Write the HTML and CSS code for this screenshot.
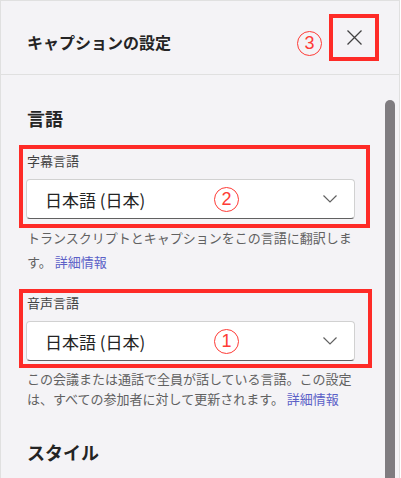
FILE: index.html
```html
<!DOCTYPE html>
<html lang="ja">
<head>
  <meta charset="UTF-8">
  <title>キャプションの設定</title>
  <link rel="stylesheet" href="styles.css">
</head>
<body>

  <div class="panel">
    <div class="header">
      <h1 class="title">キャプションの設定</h1>
      <span class="badge badge-head">3</span>
      <div class="close-mark">
        <svg width="15" height="15" viewBox="0 0 15 15">
          <path d="M0.5 0.5 L14.5 14.5 M14.5 0.5 L0.5 14.5" stroke="#424242" stroke-width="1.3" fill="none"/>
        </svg>
      </div>
    </div>

    <div class="content">
      <div class="main">
        <h2 class="section-title first">言語</h2>

        <div class="field field-caption">
          <div class="field-label">字幕言語</div>
          <div class="select">
            <span class="select-text">日本語 (日本)</span>
            <span class="badge badge-select">2</span>
            <svg class="chevron" width="14" height="8" viewBox="0 0 14 8">
              <path d="M0.5 0.5 L7 7 L13.5 0.5" stroke="#616161" stroke-width="1.2" fill="none"/>
            </svg>
          </div>
        </div>
        <p class="desc desc-caption">トランスクリプトとキャプションをこの言語に翻訳します。&nbsp;<a href="#" class="more">詳細情報</a></p>

        <div class="field field-spoken">
          <div class="field-label">音声言語</div>
          <div class="select">
            <span class="select-text">日本語 (日本)</span>
            <span class="badge badge-select">1</span>
            <svg class="chevron" width="14" height="8" viewBox="0 0 14 8">
              <path d="M0.5 0.5 L7 7 L13.5 0.5" stroke="#616161" stroke-width="1.2" fill="none"/>
            </svg>
          </div>
        </div>
        <p class="desc desc-spoken">この会議または通話で全員が話している言語。この設定は、すべての参加者に対して更新されます。&nbsp;<a href="#" class="more">詳細情報</a></p>

        <h2 class="section-title style-title">スタイル</h2>
      </div>
      <div class="scrollbar"></div>
    </div>
  </div>

</body>
</html>
```

FILE: styles.css
```css
html, body { margin: 0; padding: 0; }
body { background: #fff; font-family: "Noto Sans CJK JP", "Noto Sans", sans-serif; color: #242424; width: 401px; height: 478px; overflow: hidden; }

.panel { width: 400px; height: 478px; box-sizing: border-box; background: #f4f3f6; border: 1px solid #e0e0e0; border-bottom: none; display: flex; flex-direction: column; }

.header { height: 74px; box-sizing: border-box; border-bottom: 1px solid #e0e0e0; display: flex; align-items: flex-start; padding: 13px 20px 0 26px; flex-shrink: 0; }
.title { flex: 1; margin: 16px 0 0 0; font-size: 16px; line-height: 24px; font-weight: 700; }
.close-mark { width: 50px; height: 47px; box-sizing: border-box; border: 4px solid #fe2b27; display: flex; align-items: center; justify-content: center; }

.badge { width: 25px; height: 25px; box-sizing: border-box; border: 1.5px solid #fe3b36; border-radius: 50%; color: #fe3b36; font-family: "Liberation Sans", Arial, sans-serif; font-size: 18px; display: flex; align-items: center; justify-content: center; }
.badge-head { margin: 17px 7px 0 0; }
.badge-select { position: absolute; left: 187px; top: 7px; }

.content { flex: 1; display: flex; min-height: 0; }
.main { flex: 1; padding-left: 26px; }
.scrollbar { width: 10px; margin: 25px 4px 0 0; background: #7f7c80; border-radius: 5px 5px 0 0; }

.section-title { margin: 0; font-size: 18px; line-height: 24px; font-weight: 700; }
.first { margin-top: 31px; }
.style-title { margin-top: 31px; }

.field { margin-left: -8px; box-sizing: border-box; border: 4px solid #fe2b27; }
.field-caption { width: 351px; margin-top: 15px; padding: 3px 0 5px 3px; }
.field-spoken { width: 353px; margin-top: 15px; padding: 1px 0 3px 3px; }
.field-label { padding-left: 1px; font-size: 13px; line-height: 18px; color: #424242; }

.select { position: relative; margin-top: 9px; width: 329px; height: 40px; box-sizing: border-box; background: #fff; border: 1px solid #d1d1d1; border-bottom-color: #616161; border-radius: 4px; display: flex; align-items: center; padding: 0 17px 0 18px; }
.select-text { flex: 1; font-size: 17px; color: #242424; }
.chevron { display: block; }

.desc { margin: 0; font-size: 13px; color: #616161; width: 330px; }
.desc-caption { margin-top: -2px; line-height: 24px; }
.desc-spoken { margin-top: 1px; line-height: 20px; }
.more { color: #5b5fc7; text-decoration: none; }
```
